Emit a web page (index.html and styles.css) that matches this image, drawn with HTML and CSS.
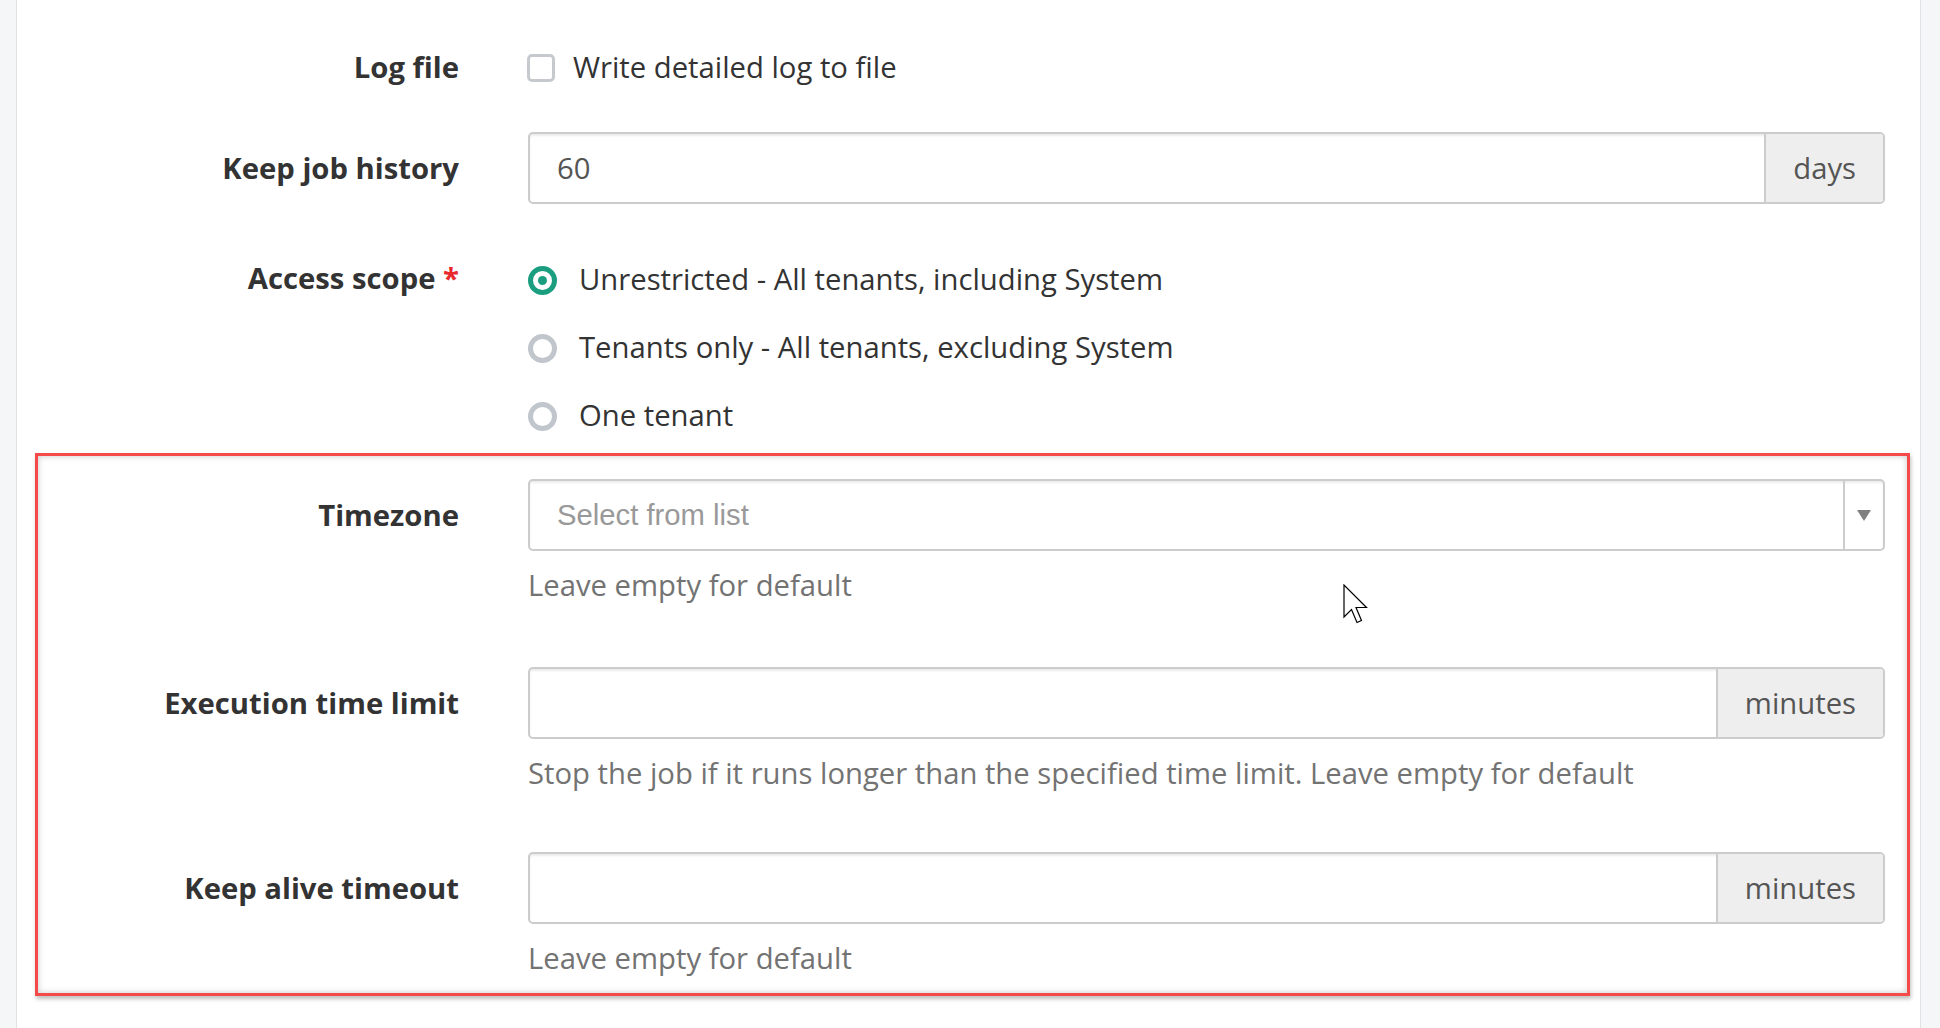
FILE: index.html
```html
<!DOCTYPE html>
<html lang="en">
<head>
<meta charset="utf-8">
<title>Job settings</title>
<link rel="stylesheet" href="styles.css">
</head>
<body>
<div class="page">
  <div class="card">
    <form class="form">
      <div class="row row-log">
        <div class="label">Log file</div>
        <div class="control">
          <label class="check"><span class="checkbox"></span><span>Write detailed log to file</span></label>
        </div>
      </div>

      <div class="row row-input row-history">
        <label class="label" for="history">Keep job history</label>
        <div class="control">
          <div class="input-group">
            <input id="history" class="input" type="text" value="60">
            <span class="addon">days</span>
          </div>
        </div>
      </div>

      <div class="row row-scope">
        <div class="label">Access scope <span class="required">*</span></div>
        <div class="control radios">
          <label class="radio"><span class="dot checked"></span><span>Unrestricted - All tenants, including System</span></label>
          <label class="radio"><span class="dot"></span><span>Tenants only - All tenants, excluding System</span></label>
          <label class="radio"><span class="dot"></span><span>One tenant</span></label>
        </div>
      </div>

      <div class="highlight">
        <div class="row row-input row-timezone">
          <div class="label">Timezone</div>
          <div class="control">
            <div class="select">
              <span class="select-value">Select from list</span>
              <span class="select-arrow"><span class="caret"></span></span>
            </div>
            <div class="help">Leave empty for default</div>
          </div>
        </div>

        <div class="row row-input row-exec">
          <label class="label" for="exec">Execution time limit</label>
          <div class="control">
            <div class="input-group">
              <input id="exec" class="input" type="text" value="">
              <span class="addon">minutes</span>
            </div>
            <div class="help">Stop the job if it runs longer than the specified time limit. Leave empty for default</div>
          </div>
        </div>

        <div class="row row-input row-alive">
          <label class="label" for="alive">Keep alive timeout</label>
          <div class="control">
            <div class="input-group">
              <input id="alive" class="input" type="text" value="">
              <span class="addon">minutes</span>
            </div>
            <div class="help">Leave empty for default</div>
          </div>
        </div>
      </div>
    </form>
  </div>
</div>

<!-- mouse pointer -->
<svg class="cursor" width="26" height="40" viewBox="0 0 26 40">
  <path d="M1 1 L1 33 L8.5 25.5 L14 38.5 L18.5 36.5 L13 23.5 L23.5 23.5 Z" fill="#fff" stroke="#000" stroke-width="1.2" stroke-linejoin="miter"/>
</svg>
</body>
</html>
```

FILE: styles.css
```css
html, body {
  margin: 0;
  height: 100%;
}

body {
  position: relative;
  background: #f5f6f8;
  font-family: "Open Sans", "DejaVu Sans", sans-serif;
  font-size: 29.25px;
  color: #333;
  overflow: hidden;
}

.page {
  display: flex;
  min-height: 1028px;
  padding: 0 19px 0 16px;
  box-sizing: border-box;
}

.card {
  flex: 1;
  background: #fff;
  border-left: 1px solid #e0e2e5;
  border-right: 1px solid #e0e2e5;
  padding-top: 47px;
}

/* form layout: label column + control column */
.row {
  display: grid;
  grid-template-columns: 442px 1357px;
  column-gap: 69px;
  align-items: start;
}

.label {
  display: block;
  text-align: right;
  font-weight: 700;
  line-height: 40px;
  color: #333;
}

.row-input .label {
  padding-top: 16px;
}

.required {
  color: #e8282d;
}

.row-log {
  margin-bottom: 45px;
}

.row-history {
  margin-bottom: 55px;
}

.row-scope {
  margin-bottom: 18px;
}

.row-scope .label {
  margin-top: -1px;
}

/* checkbox */
.check {
  display: flex;
  align-items: center;
  gap: 18px;
  line-height: 40px;
  color: #333;
}

.checkbox {
  width: 28px;
  height: 28px;
  box-sizing: border-box;
  border: 3px solid #c6cacf;
  border-radius: 5px;
  margin-left: -1px;
  margin-top: 2px;
}

/* text input with addon */
.input-group {
  display: flex;
  height: 72px;
  box-sizing: border-box;
  border: 2px solid #ccc;
  border-radius: 5px;
  box-shadow: inset 0 2px 2px rgba(0, 0, 0, 0.075);
  overflow: hidden;
}

.input {
  flex: 1;
  min-width: 0;
  border: 0;
  outline: 0;
  background: transparent;
  padding: 0 27px;
  font: inherit;
  color: #555;
}

.addon {
  display: flex;
  align-items: center;
  padding: 0 27px;
  background: #eee;
  border-left: 2px solid #ccc;
  color: #555;
}

/* radio list */
.radios {
  display: flex;
  flex-direction: column;
  gap: 28px;
}

.radio {
  display: flex;
  align-items: center;
  gap: 22px;
  line-height: 40px;
  color: #333;
}

.dot {
  position: relative;
  width: 29px;
  height: 29px;
  box-sizing: border-box;
  border: 5px solid #c1c6cd;
  border-radius: 50%;
  flex: none;
  margin-top: 2px;
}

.dot.checked {
  border-color: #1b9e80;
}

.dot.checked::after {
  content: "";
  position: absolute;
  left: 50%;
  top: 50%;
  width: 9px;
  height: 9px;
  margin: -4.5px 0 0 -4.5px;
  border-radius: 50%;
  background: #1b9e80;
}

/* outlined section */
.highlight {
  position: relative;
  padding: 26px 0 18px;
}

.highlight::after {
  content: "";
  position: absolute;
  top: 0;
  bottom: 0;
  left: 18px;
  right: 10px;
  border: 3px solid #f64a4a;
  box-shadow: inset 0 0 6px rgba(0, 0, 0, 0.22), 1px 3px 4px rgba(0, 0, 0, 0.25);
  pointer-events: none;
}

.row-timezone {
  margin-bottom: 62px;
}

.row-exec {
  margin-bottom: 59px;
}

/* select */
.select {
  display: flex;
  height: 72px;
  box-sizing: border-box;
  border: 2px solid #ccc;
  border-radius: 5px;
  box-shadow: inset 0 2px 2px rgba(0, 0, 0, 0.075);
}

.select-value {
  flex: 1;
  display: flex;
  align-items: center;
  padding-left: 27px;
  font-family: "Liberation Sans", Arial, sans-serif;
  font-size: 29.25px;
  color: #999;
}

.select-arrow {
  width: 38px;
  display: flex;
  align-items: center;
  justify-content: center;
  border-left: 2px solid #ccc;
}

.caret {
  width: 0;
  height: 0;
  border-left: 7px solid transparent;
  border-right: 7px solid transparent;
  border-top: 11px solid #808080;
}

.help {
  margin-top: 14px;
  line-height: 40px;
  color: #737373;
}

.cursor {
  position: absolute;
  left: 1343px;
  top: 584px;
}
```
